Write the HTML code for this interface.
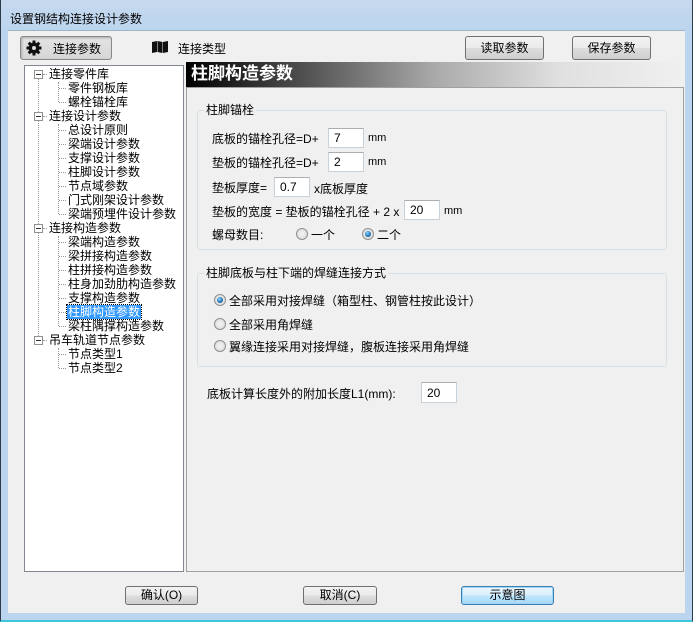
<!DOCTYPE html>
<html><head><meta charset="utf-8">
<style>
*{box-sizing:border-box;margin:0;padding:0}
body{width:693px;height:622px;overflow:hidden;background:#bcd5ee;font-family:"Liberation Sans","Noto Sans CJK SC","WenQuanYi Zen Hei",sans-serif;font-size:12px;color:#000;position:relative}
.a{position:absolute;white-space:nowrap}
#win{position:absolute;left:0;top:0;width:693px;height:622px;border-left:1px solid #2d3a4a;border-right:1px solid #2d3a4a;border-bottom:2px solid #3fc6d8;background:linear-gradient(#c6d9ee,#bcd5ee 30px)}
#client{position:absolute;left:8px;top:30px;width:677px;height:583px;background:#f0f0f0;border-top:1px solid #a0b4c8}
.btn{position:absolute;border:1px solid #707070;border-radius:3px;background:linear-gradient(#f2f2f2,#ebebeb 50%,#dddddd 51%,#cfcfcf);text-align:center;font-size:12px}
.inp{position:absolute;background:#fff;border:1px solid #c8d0d8;border-top-color:#abadb3;padding-left:5px;font-size:12px;line-height:18px}
.grp{position:absolute;border:1px solid #d5dfe5;border-radius:3px}
.grp .t{position:absolute;top:-8px;left:6px;background:#f0f0f0;padding:0 2px;line-height:14px}
.rad{position:absolute;width:12px;height:12px;border-radius:50%;border:1px solid #8e8f8f;background:radial-gradient(#f4f4f4,#d8d8d8)}
.rad.on::after{content:"";position:absolute;left:2px;top:2px;width:6px;height:6px;border-radius:50%;background:radial-gradient(circle at 40% 35%,#8fd6ff,#1a6fb0 60%,#0c3c6c)}
#tree{position:absolute;left:24px;top:65px;width:160px;height:507px;background:#fff;border:1px solid #828790}
.tr{position:absolute;line-height:14px;font-size:12px;white-space:nowrap}
.box{position:absolute;width:9px;height:9px;border:1px solid #919191;background:#fff}
.box::after{content:"";position:absolute;left:1px;top:3px;width:5px;height:1px;background:#333}
.vd{position:absolute;width:1px;border-left:1px dotted #999}
.hd{position:absolute;height:1px;border-top:1px dotted #999}
</style></head><body>
<div id="win"></div>
<div class="a" style="left:10px;top:10px;font-size:12px;color:#000">设置钢结构连接设计参数</div>
<div id="client"></div>

<!-- toolbar -->
<div class="a" style="left:20px;top:36px;width:92px;height:24px;border:1px solid #8a8a8a;border-radius:3px;background:linear-gradient(#e4e4e4,#d6d6d6);box-shadow:inset 1px 1px 2px #aaa"></div>
<svg class="a" style="left:25px;top:39px" width="18" height="18" viewBox="0 0 18 18"><g fill="#111"><circle cx="9" cy="9" r="5.5"/><rect x="7.5" y="1.5" width="3" height="15"/><rect x="1.5" y="7.5" width="15" height="3"/><rect x="7.5" y="1.5" width="3" height="15" transform="rotate(45 9 9)"/><rect x="7.5" y="1.5" width="3" height="15" transform="rotate(-45 9 9)"/></g><circle cx="9" cy="9" r="2" fill="#ddd"/></svg>
<div class="a" style="left:53px;top:40px;font-size:12px">连接参数</div>
<svg class="a" style="left:152px;top:41px" width="16" height="12" viewBox="0 0 16 12"><path d="M0 1 L5 0 L5 11 L0 12Z M5.5 0 L10.5 1 L10.5 12 L5.5 11Z M11 1 L16 0 L16 11 L11 12Z" fill="#111"/></svg>
<div class="a" style="left:178px;top:40px;font-size:12px">连接类型</div>
<div class="btn" style="left:465px;top:36px;width:79px;height:24px;line-height:22px">读取参数</div>
<div class="btn" style="left:572px;top:36px;width:79px;height:24px;line-height:22px">保存参数</div>

<!-- tree -->
<div id="tree"></div>
<div class="vd" style="left:38px;top:78px;height:266px"></div>
<div class="vd" style="left:58px;top:82px;height:20px"></div>
<div class="vd" style="left:58px;top:124px;height:90px"></div>
<div class="vd" style="left:58px;top:236px;height:90px"></div>
<div class="vd" style="left:58px;top:348px;height:20px"></div>
<div id="treeitems"></div>
<script></script>
<div class="box" style="left:34px;top:70px"></div><div class="hd" style="left:43px;top:74px;width:4px"></div><div class="tr" style="left:49px;top:67px">连接零件库</div>
<div class="hd" style="left:59px;top:88px;width:7px"></div><div class="tr" style="left:68px;top:81px">零件钢板库</div>
<div class="hd" style="left:59px;top:102px;width:7px"></div><div class="tr" style="left:68px;top:95px">螺栓锚栓库</div>
<div class="box" style="left:34px;top:112px"></div><div class="hd" style="left:43px;top:116px;width:4px"></div><div class="tr" style="left:49px;top:109px">连接设计参数</div>
<div class="hd" style="left:59px;top:130px;width:7px"></div><div class="tr" style="left:68px;top:123px">总设计原则</div>
<div class="hd" style="left:59px;top:144px;width:7px"></div><div class="tr" style="left:68px;top:137px">梁端设计参数</div>
<div class="hd" style="left:59px;top:158px;width:7px"></div><div class="tr" style="left:68px;top:151px">支撑设计参数</div>
<div class="hd" style="left:59px;top:172px;width:7px"></div><div class="tr" style="left:68px;top:165px">柱脚设计参数</div>
<div class="hd" style="left:59px;top:186px;width:7px"></div><div class="tr" style="left:68px;top:179px">节点域参数</div>
<div class="hd" style="left:59px;top:200px;width:7px"></div><div class="tr" style="left:68px;top:193px">门式刚架设计参数</div>
<div class="hd" style="left:59px;top:214px;width:7px"></div><div class="tr" style="left:68px;top:207px">梁端预埋件设计参数</div>
<div class="box" style="left:34px;top:224px"></div><div class="hd" style="left:43px;top:228px;width:4px"></div><div class="tr" style="left:49px;top:221px">连接构造参数</div>
<div class="hd" style="left:59px;top:242px;width:7px"></div><div class="tr" style="left:68px;top:235px">梁端构造参数</div>
<div class="hd" style="left:59px;top:256px;width:7px"></div><div class="tr" style="left:68px;top:249px">梁拼接构造参数</div>
<div class="hd" style="left:59px;top:270px;width:7px"></div><div class="tr" style="left:68px;top:263px">柱拼接构造参数</div>
<div class="hd" style="left:59px;top:284px;width:7px"></div><div class="tr" style="left:68px;top:277px">柱身加劲肋构造参数</div>
<div class="hd" style="left:59px;top:298px;width:7px"></div><div class="tr" style="left:68px;top:291px">支撑构造参数</div>
<div class="hd" style="left:59px;top:312px;width:7px"></div><div class="tr" style="left:67px;top:305px;background:#3399ff;color:#fff;padding:0 1px;outline:1px dotted #000">柱脚构造参数</div>
<div class="hd" style="left:59px;top:326px;width:7px"></div><div class="tr" style="left:68px;top:319px">梁柱隅撑构造参数</div>
<div class="box" style="left:34px;top:336px"></div><div class="hd" style="left:43px;top:340px;width:4px"></div><div class="tr" style="left:49px;top:333px">吊车轨道节点参数</div>
<div class="hd" style="left:59px;top:354px;width:7px"></div><div class="tr" style="left:68px;top:347px">节点类型1</div>
<div class="hd" style="left:59px;top:368px;width:7px"></div><div class="tr" style="left:68px;top:361px">节点类型2</div>

<!-- header -->
<div class="a" style="left:186px;top:62px;width:499px;height:25px;background:linear-gradient(90deg,#000 0%,#555 25%,#aaa 50%,#e0e0e0 75%,#f0f0f0 100%)"></div>
<div class="a" style="left:191px;top:64px;font-size:17px;font-weight:bold;color:#fff;line-height:20px">柱脚构造参数</div>
<div class="a" style="left:186px;top:87px;width:498px;height:485px;border:1px solid #a0a0a0"></div>

<!-- group 1 -->
<div class="grp" style="left:197px;top:110px;width:470px;height:140px"><div class="t">柱脚锚栓</div></div>
<div class="a" style="left:212px;top:130px">底板的锚栓孔径=D+</div>
<div class="inp" style="left:328px;top:128px;width:36px;height:20px">7</div>
<div class="a" style="left:368px;top:132px;font-size:11px">mm</div>
<div class="a" style="left:212px;top:154px">垫板的锚栓孔径=D+</div>
<div class="inp" style="left:328px;top:152px;width:36px;height:20px">2</div>
<div class="a" style="left:368px;top:156px;font-size:11px">mm</div>
<div class="a" style="left:212px;top:179px">垫板厚度=</div>
<div class="inp" style="left:274px;top:177px;width:36px;height:20px">0.7</div>
<div class="a" style="left:314px;top:180px">x底板厚度</div>
<div class="a" style="left:212px;top:203px">垫板的宽度 = 垫板的锚栓孔径 + 2 x</div>
<div class="inp" style="left:404px;top:200px;width:36px;height:20px">20</div>
<div class="a" style="left:444px;top:205px;font-size:11px">mm</div>
<div class="a" style="left:212px;top:226px">螺母数目:</div>
<div class="rad" style="left:296px;top:228px"></div><div class="a" style="left:311px;top:226px">一个</div>
<div class="rad on" style="left:362px;top:228px"></div><div class="a" style="left:377px;top:226px">二个</div>

<!-- group 2 -->
<div class="grp" style="left:197px;top:273px;width:470px;height:94px"><div class="t">柱脚底板与柱下端的焊缝连接方式</div></div>
<div class="rad on" style="left:214px;top:294px"></div><div class="a" style="left:229px;top:292px">全部采用对接焊缝（箱型柱、钢管柱按此设计）</div>
<div class="rad" style="left:214px;top:318px"></div><div class="a" style="left:229px;top:316px">全部采用角焊缝</div>
<div class="rad" style="left:214px;top:340px"></div><div class="a" style="left:229px;top:338px">翼缘连接采用对接焊缝，腹板连接采用角焊缝</div>

<div class="a" style="left:207px;top:385px">底板计算长度外的附加长度L1(mm):</div>
<div class="inp" style="left:421px;top:382px;width:36px;height:21px;line-height:21px">20</div>

<!-- bottom buttons -->
<div class="btn" style="left:125px;top:586px;width:73px;height:19px;line-height:17px">确认(O)</div>
<div class="btn" style="left:303px;top:586px;width:74px;height:19px;line-height:17px">取消(C)</div>
<div class="btn" style="left:461px;top:586px;width:93px;height:19px;line-height:17px;border-color:#3c7fb1;background:linear-gradient(#eaf6fd,#d9f0fc 50%,#bee6fd 51%,#a7d9f5);box-shadow:inset 0 0 0 1px #9fd6f7">示意图</div>
</body></html>
